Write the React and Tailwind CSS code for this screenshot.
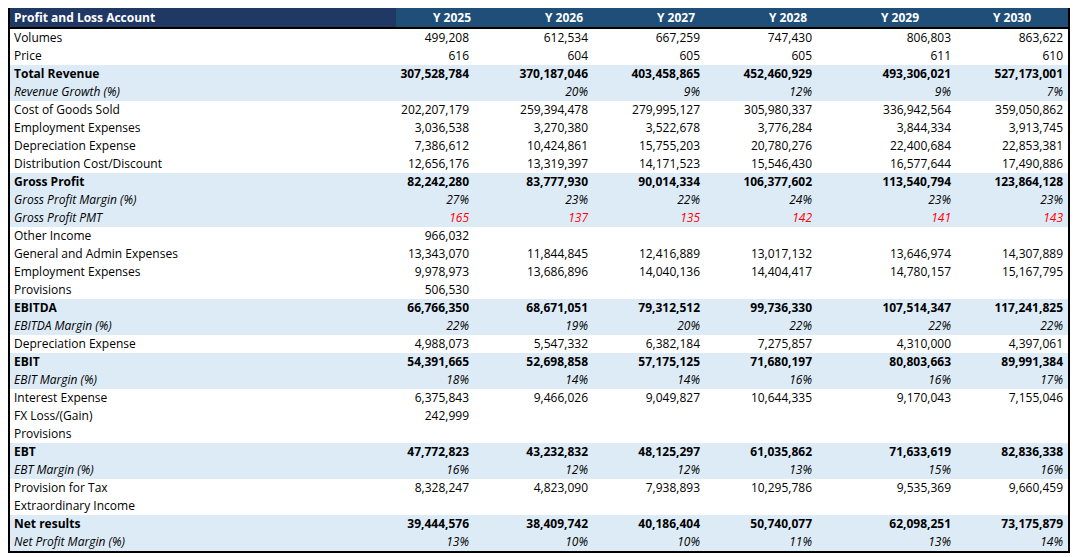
const rows = [
["Volumes","",["499,208","612,534","667,259","747,430","806,803","863,622"]],
["Price","",["616","604","605","605","611","610"]],
["Total Revenue","b",["307,528,784","370,187,046","403,458,865","452,460,929","493,306,021","527,173,001"]],
["Revenue Growth (%)","i",["","20%","9%","12%","9%","7%"]],
["Cost of Goods Sold","",["202,207,179","259,394,478","279,995,127","305,980,337","336,942,564","359,050,862"]],
["Employment Expenses","",["3,036,538","3,270,380","3,522,678","3,776,284","3,844,334","3,913,745"]],
["Depreciation Expense","",["7,386,612","10,424,861","15,755,203","20,780,276","22,400,684","22,853,381"]],
["Distribution Cost/Discount","",["12,656,176","13,319,397","14,171,523","15,546,430","16,577,644","17,490,886"]],
["Gross Profit","b",["82,242,280","83,777,930","90,014,334","106,377,602","113,540,794","123,864,128"]],
["Gross Profit Margin (%)","i",["27%","23%","22%","24%","23%","23%"]],
["Gross Profit PMT","ir",["165","137","135","142","141","143"]],
["Other Income","",["966,032","","","","",""]],
["General and Admin Expenses","",["13,343,070","11,844,845","12,416,889","13,017,132","13,646,974","14,307,889"]],
["Employment Expenses","",["9,978,973","13,686,896","14,040,136","14,404,417","14,780,157","15,167,795"]],
["Provisions","",["506,530","","","","",""]],
["EBITDA","b",["66,766,350","68,671,051","79,312,512","99,736,330","107,514,347","117,241,825"]],
["EBITDA Margin (%)","i",["22%","19%","20%","22%","22%","22%"]],
["Depreciation Expense","",["4,988,073","5,547,332","6,382,184","7,275,857","4,310,000","4,397,061"]],
["EBIT","b",["54,391,665","52,698,858","57,175,125","71,680,197","80,803,663","89,991,384"]],
["EBIT Margin (%)","i",["18%","14%","14%","16%","16%","17%"]],
["Interest Expense","",["6,375,843","9,466,026","9,049,827","10,644,335","9,170,043","7,155,046"]],
["FX Loss/(Gain)","",["242,999","","","","",""]],
["Provisions","",["","","","","",""]],
["EBT","b",["47,772,823","43,232,832","48,125,297","61,035,862","71,633,619","82,836,338"]],
["EBT Margin (%)","i",["16%","12%","12%","13%","15%","16%"]],
["Provision for Tax","",["8,328,247","4,823,090","7,938,893","10,295,786","9,535,369","9,660,459"]],
["Extraordinary Income","",["","","","","",""]],
["Net results","b",["39,444,576","38,409,742","40,186,404","50,740,077","62,098,251","73,175,879"]],
["Net Profit Margin (%)","i",["13%","10%","10%","11%","13%","14%"]],
];
const pads = ["pr-[39px]","pr-[32px]","pr-[32px]","pr-[32px]","pr-[5px]","pr-[5px]"];
const years = ["Y 2025","Y 2026","Y 2027","Y 2028","Y 2029","Y 2030"];
export default function App(){
  return (
    <div className="w-[1077px] h-[557px] bg-white pt-[8px] pl-[8px]" style={{fontFamily:'"Open Sans", sans-serif'}}>
      <div className="w-[1062px] border-2 border-black border-t-0">
        <div className="flex h-[19px] items-center text-white text-[12px] font-bold">
          <div className="w-[386px] h-full bg-[#203864] pl-[4px] flex items-center">Profit and Loss Account</div>
          {years.map(y=> <div key={y} className="w-[112px] h-full bg-[#1f4e79] flex items-center justify-center">{y}</div>)}
        </div>
        <div className="border-t-2 border-black">
        {rows.map(([l,s,v],i)=>{
          const blue = s.includes("b")||s.includes("i");
          return (
            <div key={i} className={`flex h-[18px] items-center text-[12px] ${blue?"bg-[#ddebf7]":""} ${s.includes("b")?"font-bold":""} ${s.includes("i")?"italic text-[11px]":""}`}>
              <div className="w-[386px] pl-[4px] text-black">{l}</div>
              {v.map((x,j)=> <div key={j} className={`w-[112px] text-right ${pads[j]} ${s.includes("r")?"text-[#ff0000]":"text-black"}`}>{x}</div>)}
            </div>
          );
        })}
        </div>
      </div>
    </div>
  );
}
